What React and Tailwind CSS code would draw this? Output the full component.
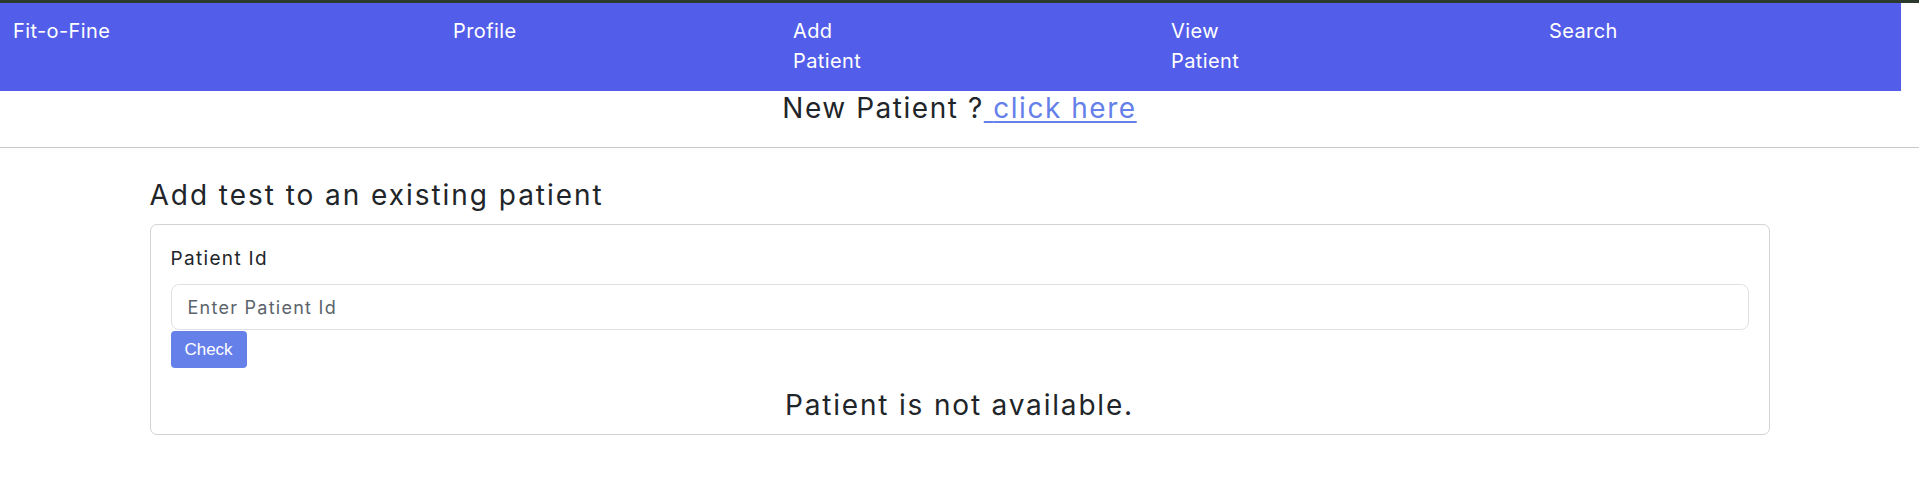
const NAV_ITEMS = [
  { label: 'Fit-o-Fine', width: 'w-[440px]' },
  { label: 'Profile', width: 'w-[340px]' },
  { label: 'Add Patient', width: 'w-[378px]' },
  { label: 'View Patient', width: 'w-[378px]' },
  { label: 'Search', width: 'w-[300px]' },
];

export default function App() {
  return (
    <div
      className="min-h-screen bg-white text-[#212529] tracking-[0.065em]"
      style={{ fontFamily: 'Inter, "Open Sans", sans-serif' }}
    >
      <div className="h-[3px] bg-[#2c3a2e]" />

      <nav className="w-[1901px] h-[88px] bg-[#525ee9] text-white text-[20px] leading-[30px] flex pl-[13px] pt-[13px] tracking-[0.02em]">
        {NAV_ITEMS.map(({ label, width }) => (
          <div key={label} className={`${width} shrink-0`}>
            <span className={label.includes(' ') ? 'block max-w-[80px]' : 'block whitespace-nowrap'}>
              {label}
            </span>
          </div>
        ))}
      </nav>

      <div className="text-center text-[28px] leading-[34px] tracking-[0.055em]">
        New Patient ?
        <a href="#" className="text-[#6680ea] underline underline-offset-[3px]">
          {' '}click here
        </a>
      </div>

      <hr className="mt-[22px] border-0 border-t border-[#c8c8c8]" />

      <div className="mx-auto w-[1620px] pt-[30px]">
        <h4 className="text-[28px] leading-[34px] mb-[12px] tracking-[0.07em]">Add test to an existing patient</h4>

        <div className="border border-[#d3d3d3] rounded-[7px] px-5 pt-5 pb-[12px]">
          <label className="block text-[19px] leading-[27px] mb-[12px] tracking-[0.07em]">Patient Id</label>
          <input
            type="text"
            placeholder="Enter Patient Id"
            className="block w-full h-[46px] px-4 text-[18px] tracking-[0.07em] border border-[#dee2e6] rounded-[8px] outline-none placeholder:text-[#5c636a]"
          />
          <button
            className="mt-px h-[37px] w-[76px] bg-[#6680ea] text-white text-[17px] rounded-[4px] tracking-normal"
            style={{ fontFamily: '"Liberation Sans", Arial, sans-serif' }}
          >
            Check
          </button>
          <p className="mt-[20px] text-center text-[28px] leading-[34px] tracking-[0.065em]">Patient is not available.</p>
        </div>
      </div>
    </div>
  );
}
